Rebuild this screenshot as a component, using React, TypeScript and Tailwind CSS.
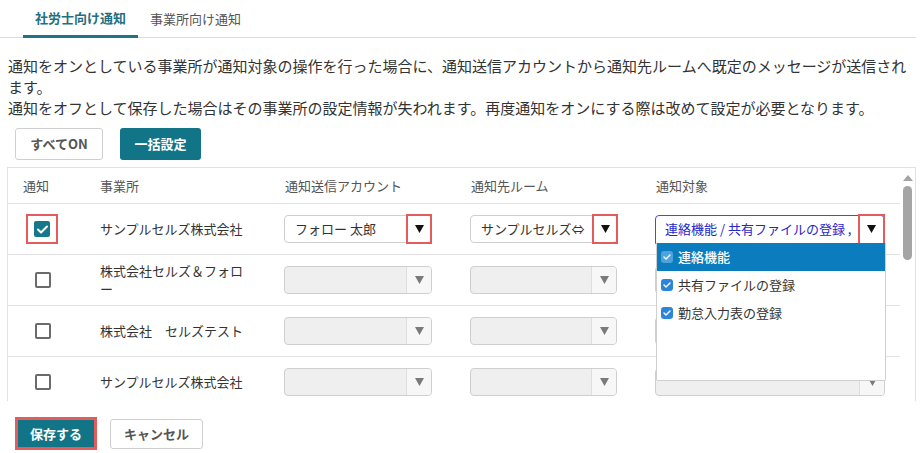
import React from "react";

const FONT = { fontFamily: '"Noto Sans CJK JP", "Noto Sans", sans-serif' };

const Tri = ({ color = "#111" }: { color?: string }) => (
  <svg width="9" height="8" viewBox="0 0 9 8">
    <polygon points="0,0 9,0 4.5,8" fill={color} />
  </svg>
);

const CheckBox = ({ checked }: { checked?: boolean }) =>
  checked ? (
    <div className="w-[16px] h-[16px] rounded-[2px] bg-[#16788a] flex items-center justify-center">
      <svg width="11" height="9" viewBox="0 0 11 9">
        <path d="M1 4.5 L4 7.5 L10 1.5" stroke="#fff" strokeWidth="2" fill="none" strokeLinecap="round" strokeLinejoin="round" />
      </svg>
    </div>
  ) : (
    <div className="w-[16px] h-[16px] rounded-[2px] border-2 border-[#6b6b6b] bg-white" />
  );

const MiniCheck = ({ light }: { light?: boolean }) => (
  <div className={`w-[12px] h-[12px] rounded-[3px] flex items-center justify-center ${light ? "bg-[#4ea3dc]" : "bg-[#2c86d8]"}`}>
    <svg width="8" height="6" viewBox="0 0 8 6">
      <path d="M1 3 L3 5 L7 1" stroke="#fff" strokeWidth="1.4" fill="none" strokeLinecap="round" strokeLinejoin="round" />
    </svg>
  </div>
);

const DisabledSelect = ({ w }: { w: string }) => (
  <div className={`${w} h-[28px] rounded-[4px] border border-[#cfcfcf] bg-[#efefef] flex overflow-hidden`}>
    <div className="flex-1" />
    <div className="w-[25px] border-l border-[#dedede] bg-[#f7f7f7] flex items-center justify-center">
      <Tri color="#7a7a7a" />
    </div>
  </div>
);

const ActiveSelect = ({ text }: { text: string }) => (
  <div className="w-[148px] h-[28px] rounded-[4px] border border-[#cfcfcf] bg-white flex items-center relative">
    <div className="flex-1 pl-[10px] text-[13px] text-[#333] whitespace-nowrap overflow-hidden">{text}</div>
    <div className="w-[26px] h-[30px] -mr-px border-2 border-[#e35b5b] flex items-center justify-center">
      <Tri />
    </div>
  </div>
);

const rows = [
  { name: "サンプルセルズ株式会社", active: true },
  { name: "株式会社セルズ＆フォロー", active: false },
  { name: "株式会社　セルズテスト", active: false },
  { name: "サンプルセルズ株式会社", active: false },
];

export default function App() {
  return (
    <div className="w-[923px] h-[453px] bg-white overflow-hidden text-[#333]" style={FONT}>
      {/* tabs */}
      <div className="w-[916px] h-[38px] border-b border-[#dcdcdc] flex">
        <div className="ml-[23px] w-[115px] h-[38px] border-b-[3px] border-[#1f7486] flex items-center justify-center text-[13px] font-bold text-[#1f6f80]">
          社労士向け通知
        </div>
        <div className="px-[12px] h-[37px] flex items-center text-[13px] text-[#555]">事業所向け通知</div>
      </div>

      {/* description */}
      <p className="mt-[17px] ml-[8px] w-[907px] text-[15px] leading-[21px] text-[#333]">
        通知をオンとしている事業所が通知対象の操作を行った場合に、通知送信アカウントから通知先ルームへ既定のメッセージが送信されます。
        <br />
        通知をオフとして保存した場合はその事業所の設定情報が失われます。再度通知をオンにする際は改めて設定が必要となります。
      </p>

      {/* top buttons */}
      <div className="mt-[10px] ml-[15px] flex gap-[17px]">
        <button className="w-[88px] h-[32px] rounded-[3px] border border-[#cfcfcf] bg-white text-[13px] font-bold text-[#555]">
          すべてON
        </button>
        <button className="w-[81px] h-[32px] rounded-[3px] bg-[#117487] text-[13px] font-bold text-white">一括設定</button>
      </div>

      {/* table */}
      <div className="mt-[7px] ml-[7px] w-[909px] h-[234px] border border-b-0 border-[#e2e2e2] relative overflow-hidden flex">
        <div className="w-[892px]">
          <div className="h-[36px] border-b border-[#e2e2e2] flex items-center text-[13px] text-[#555]">
            <div className="w-[92px] pl-[15px]">通知</div>
            <div className="w-[184px]">事業所</div>
            <div className="w-[186px] pl-px">通知送信アカウント</div>
            <div className="w-[185px] pl-px">通知先ルーム</div>
            <div className="flex-1 pl-px">通知対象</div>
          </div>
          {rows.map((r, i) => (
            <div key={i} className="h-[51px] border-b border-[#e2e2e2] flex items-center text-[13px] text-[#333]">
              <div className="w-[92px] pl-[27px] flex items-center">
                {r.active ? (
                  <div className="w-[32px] h-[30px] border-2 border-[#e35b5b] flex items-center justify-center -ml-[9px]">
                    <CheckBox checked />
                  </div>
                ) : (
                  <CheckBox />
                )}
              </div>
              <div className="w-[184px] pr-[30px] leading-[18px]">{r.name}</div>
              <div className="w-[186px]">
                {r.active ? <ActiveSelect text="フォロー 太郎" /> : <DisabledSelect w="w-[148px]" />}
              </div>
              <div className="w-[185px]">
                {r.active ? <ActiveSelect text="サンプルセルズ⇔" /> : <DisabledSelect w="w-[147px]" />}
              </div>
              <div className="flex-1">
                {r.active ? (
                  <div className="w-[230px] h-[29px] rounded-t-[4px] border border-[#5d43cf] bg-white flex items-center">
                    <div className="flex-1 pl-[9px] text-[13px] text-[#2626c9] whitespace-nowrap overflow-hidden">
                      連絡機能 / 共有ファイルの登録 ,
                    </div>
                    <div className="w-[27px] h-[31px] -mr-px border-2 border-[#e35b5b] flex items-center justify-center">
                      <Tri />
                    </div>
                  </div>
                ) : (
                  <DisabledSelect w="w-[230px]" />
                )}
              </div>
            </div>
          ))}
        </div>

        {/* scrollbar */}
        <div className="flex-1 flex flex-col items-center pt-[7px]">
          <svg width="10" height="6" viewBox="0 0 10 6">
            <polygon points="5,0 10,6 0,6" fill="#a3a3a3" />
          </svg>
          <div className="mt-[5px] w-[9px] h-[74px] rounded-full bg-[#a5a5a5]" />
        </div>

        {/* open dropdown */}
        <div className="absolute left-[648px] top-[75px] w-[230px] h-[138px] bg-white border border-t-0 border-[#cfcfcf] rounded-b-[2px] text-[13px]">
          <div className="h-[28px] bg-[#0b7dbf] flex items-center gap-[5px] pl-[4px] text-white font-medium">
            <MiniCheck light />
            連絡機能
          </div>
          <div className="h-[28px] flex items-center gap-[5px] pl-[4px] text-[#333]">
            <MiniCheck />
            共有ファイルの登録
          </div>
          <div className="h-[28px] flex items-center gap-[5px] pl-[4px] text-[#333]">
            <MiniCheck />
            勤怠入力表の登録
          </div>
        </div>
      </div>

      {/* bottom buttons */}
      <div className="mt-[16px] ml-[15px] flex items-center gap-[13px]">
        <div className="w-[82px] h-[33px] border-[3px] border-[#e35b5b] flex">
          <button className="flex-1 bg-[#117487] text-[13px] font-bold text-white">保存する</button>
        </div>
        <button className="w-[93px] h-[30px] rounded-[3px] border border-[#cfcfcf] bg-white text-[13px] font-bold text-[#555]">
          キャンセル
        </button>
      </div>
    </div>
  );
}
